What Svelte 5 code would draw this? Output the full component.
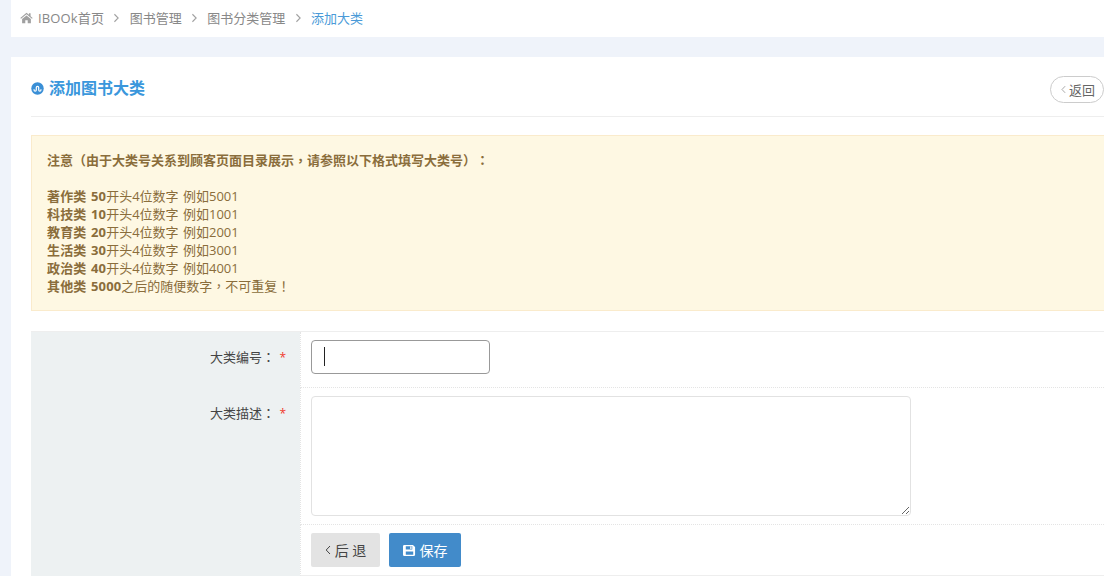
<script>
  const rules = [
    ['著作类 50', '开头4位数字 例如5001'],
    ['科技类 10', '开头4位数字 例如1001'],
    ['教育类 20', '开头4位数字 例如2001'],
    ['生活类 30', '开头4位数字 例如3001'],
    ['政治类 40', '开头4位数字 例如4001']
  ];
  const crumbs = ['图书管理', '图书分类管理'];
</script>

<div class="page">
  <nav class="crumbs">
    <svg class="home" viewBox="0 0 16 14" width="13" height="12">
      <path fill="#a0a0a0" d="M8 0.6 0.4 7l.9 1L8 2.5 14.7 8l.9-1-2.6-2.2V1.2h-2v1.9zM2.6 8.3v5.2h3.9V9.7h3v3.8h3.9V8.3L8 3.8z" />
    </svg>
    <span class="crumb first">IBOOk首页</span>
    {#each crumbs as c}
      <svg class="sep" viewBox="0 0 8 12" width="7" height="10"><path d="M1.500 1.500 6 6l-4.500 4.500" fill="none" stroke="#a0a0a0" stroke-width="1.300" /></svg>
      <span class="crumb">{c}</span>
    {/each}
    <svg class="sep" viewBox="0 0 8 12" width="7" height="10"><path d="M1.500 1.500 6 6l-4.500 4.500" fill="none" stroke="#a0a0a0" stroke-width="1.300" /></svg>
    <span class="crumb now">添加大类</span>
  </nav>

  <main class="panel">
    <header class="head">
      <h1>
        <svg viewBox="0 0 14 14" width="13" height="13">
          <circle cx="7" cy="7" r="6.700" fill="#3a8fd6" />
          <path d="M3.300 7.800v.8a1.200 1.200 0 0 0 2.400 0V6a1.300 1.300 0 0 1 2.600 0v2.600a1.200 1.200 0 0 0 2.400 0V7.800" fill="none" stroke="#fff" stroke-width="1.300" />
        </svg>
        添加图书大类
      </h1>
      <button class="back-pill">
        <svg viewBox="0 0 6 10" width="5" height="9"><path d="M5 1 1.200 5 5 9" fill="none" stroke="#999" stroke-width="1" /></svg>
        返回
      </button>
    </header>

    <section class="notice">
      <p class="title">注意<span class="p">（</span>由于大类号关系到顾客页面目录展示<span class="p">，</span>请参照以下格式填写大类号<span class="p">）：</span></p>
      {#each rules as r}
        <div class="rule"><b>{r[0]}</b>{r[1]}</div>
      {/each}
      <div class="rule"><b>其他类 5000</b>之后的随便数字<span class="p">，</span>不可重复<span class="p">！</span></div>
    </section>

    <form class="form" onsubmit={(e) => e.preventDefault()}>
      <div class="row">
        <div class="label">大类编号<span class="p">：</span> <i>*</i></div>
        <div class="field r1">
          <div class="input-wrap">
            <input type="text" class="num" />
            <span class="caret"></span>
          </div>
        </div>
      </div>
      <div class="row">
        <div class="label">大类描述<span class="p">：</span> <i>*</i></div>
        <div class="field r2"><textarea></textarea></div>
      </div>
      <div class="row">
        <div class="label"></div>
        <div class="field r3 actions">
          <button type="button" class="btn grey">
            <svg viewBox="0 0 6 10" width="6" height="10"><path d="M5 1 1.200 5 5 9" fill="none" stroke="#444" stroke-width="1" /></svg>
            后 退
          </button>
          <button type="button" class="btn blue">
            <svg viewBox="0 0 14 14" width="13" height="13">
              <path fill="#fff" fill-rule="evenodd" d="M1.500 1h9.200L13 3.300V11.500A1.500 1.500 0 0 1 11.500 13h-10A1.500 1.500 0 0 1 0 11.500v-9A1.500 1.500 0 0 1 1.500 1zM3 2.300V6h7V2.300zM7.800 2.800h1.400v2.600H7.800zM3 8v3.700h8V8z" />
            </svg>
            保存
          </button>
        </div>
      </div>
    </form>
  </main>
</div>

<style>
  :global(body) {
    margin: 0;
    background: #eff3fa;
    overflow: hidden;
  }

  .page {
    width: 1093px;
    height: 576px;
    margin-left: 11px;
    overflow: hidden;
    font-family: 'Open Sans', 'Noto Sans CJK SC', sans-serif;
    font-size: 13px;
    color: #555;
    text-spacing-trim: space-all;
  }

  .p {
    font-family: 'Noto Sans CJK TC', sans-serif;
  }

  .crumbs {
    height: 37px;
    box-sizing: border-box;
    padding: 0 0 2px 9px;
    background: #fff;
    display: flex;
    align-items: center;
    color: #888;
  }

  .home {
    margin-right: 5px;
  }

  .first {
    letter-spacing: 0.15px;
  }

  .sep {
    margin: 0 9.3px;
  }

  .now {
    color: #4a9ad8;
  }

  .panel {
    margin-top: 20px;
    background: #fff;
    height: 519px;
    padding-left: 20px;
  }

  .head {
    height: 60px;
    border-bottom: 1px solid #eee;
    display: flex;
    align-items: flex-start;
    justify-content: space-between;
    box-sizing: border-box;
  }

  h1 {
    margin: 19px 0 0;
    line-height: 24px;
    font-size: 16px;
    font-weight: 700;
    color: #3a97dc;
    display: flex;
    align-items: center;
    gap: 5px;
  }

  .back-pill {
    width: 54px;
    height: 27px;
    margin-top: 19px;
    padding: 0 0 0 10px;
    border: 1px solid #ccc;
    border-radius: 14px;
    background: #fff;
    font: inherit;
    font-size: 13px;
    color: #666;
    display: flex;
    align-items: center;
    gap: 3px;
  }

  .notice {
    margin-top: 18px;
    height: 176px;
    box-sizing: border-box;
    padding: 15px;
    background: #fef8e3;
    border: 1px solid #faebcc;
    border-right: 0;
    color: #8a6d3b;
    line-height: 18px;
  }

  .title {
    margin: 0 0 18px;
    font-weight: 700;
  }

  .rule {
    word-spacing: 1px;
  }

  .rule b {
    letter-spacing: 0.15px;
  }

  .form {
    margin-top: 20px;
    border-top: 1px solid #eee;
  }

  .row {
    display: flex;
  }

  .label {
    width: 269px;
    box-sizing: border-box;
    background: #edf1f2;
    text-align: right;
    padding: 16px 14px 0 0;
    color: #444;
    line-height: 18px;
    flex: none;
  }

  .label i {
    color: #f0382c;
    font-style: normal;
    font-size: 12px;
    margin-left: 1px;
  }

  .field {
    flex: 1;
    border-left: 1px dotted #e4e4e4;
    padding: 8px 0 8px 10px;
    border-bottom: 1px dotted #e4e4e4;
  }

  .r1 { height: 39px; }
  .r2 { height: 120px; }
  .r3 { height: 34px; border-bottom: 1px solid #eee; }

  .input-wrap {
    position: relative;
    width: 179px;
  }

  .num {
    display: block;
    width: 179px;
    height: 34px;
    box-sizing: border-box;
    border: 1px solid #999;
    border-radius: 4px;
    outline: none;
  }

  .caret {
    position: absolute;
    left: 13px;
    top: 7px;
    width: 1px;
    height: 19px;
    background: #222;
  }

  textarea {
    display: block;
    width: 600px;
    height: 120px;
    box-sizing: border-box;
    border: 1px solid #e2e2e2;
    border-radius: 4px;
    outline: none;
    margin: 0;
  }

  .actions {
    display: flex;
    gap: 9px;
  }

  .btn {
    height: 34px;
    border: 0;
    border-radius: 2px;
    font: inherit;
    font-size: 14px;
    display: flex;
    align-items: center;
    justify-content: center;
    gap: 4px;
    padding: 0;
  }

  .grey {
    width: 69px;
    background: #e3e3e3;
    color: #444;
  }

  .blue {
    width: 72px;
    background: #428bca;
    color: #fff;
  }
</style>
